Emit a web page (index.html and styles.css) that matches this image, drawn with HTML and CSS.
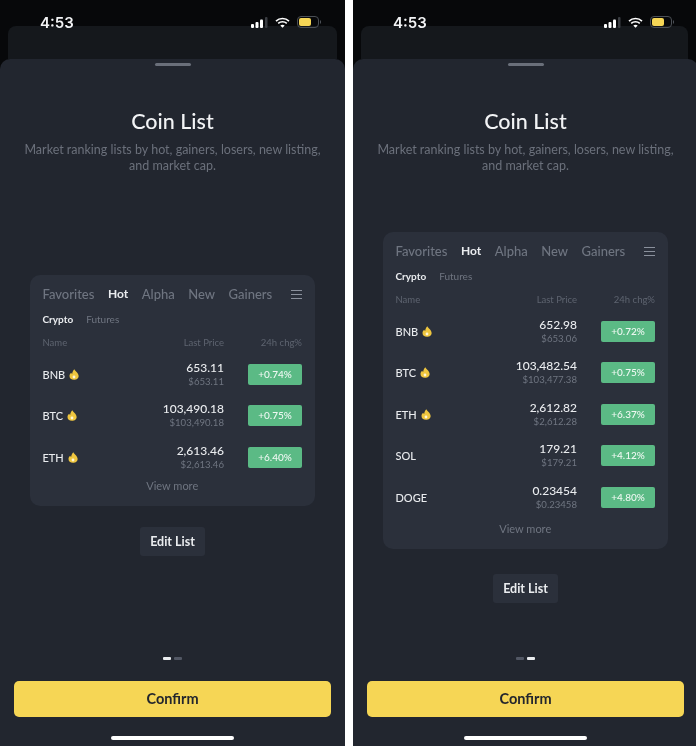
FILE: index.html
```html
<!DOCTYPE html>
<html lang="en">
<head>
  <meta charset="UTF-8" />
  <meta name="viewport" content="width=device-width, initial-scale=1.0" />
  <title>Coin List</title>
  <link rel="stylesheet" href="styles.css">
</head>
<body>
  <svg class="defs" width="0" height="0">
    <symbol id="flame" viewBox="0 0 10 11">
      <path fill="#efc63f" d="M5.3 0.2C5.8 1.8 9.4 3.6 9.6 6.8C9.8 9.3 7.7 10.8 5 10.8C2.3 10.8 0.3 9.3 0.5 6.8C0.6 5.4 1.4 4.5 2.2 3.8C2.4 4.4 2.7 4.8 3.2 5C3.2 3.2 4.1 1.3 5.3 0.2Z"/>
      <circle fill="#fff6d6" cx="5" cy="8" r="1.4"/>
    </symbol>
  </svg>

  <div class="phone">
    <div class="status-bar">
      <span class="time">4:53</span>
      <div class="status-icons">
        <svg width="17" height="11" viewBox="0 0 17 11"><rect fill="#fff" x="0" y="7" width="3" height="4" rx="1"/><rect fill="#fff" x="4.5" y="5" width="3" height="6" rx="1"/><rect fill="#fff" x="9" y="2.5" width="3" height="8.5" rx="1"/><rect fill="#3a3d42" x="14" y="0" width="2.5" height="11" rx="1"/></svg>
        <svg width="15" height="11" viewBox="0 0 15 11"><path fill="none" stroke="#fff" stroke-width="1.6" d="M1 4.1C4.6 0.7 10.4 0.7 14 4.1M3.2 6.4C5.6 4.2 9.4 4.2 11.8 6.4"/><path fill="#fff" d="M7.5 10.8L5.3 8.4C6.5 7.4 8.5 7.4 9.7 8.4Z"/></svg>
        <svg width="24" height="12" viewBox="0 0 24 12"><rect fill="none" stroke="#4b4f55" x="0.5" y="0.5" width="21" height="11" rx="3.5"/><rect fill="#f6d655" x="2" y="2" width="12" height="8" rx="2"/><rect fill="#4b4f55" x="23" y="4.5" width="1" height="3"/></svg>
      </div>
    </div>
    <div class="back-card"></div>
    <div class="sheet">
      <div class="handle"></div>
      <h1>Coin List</h1>
      <p class="desc">Market ranking lists by hot, gainers, losers, new listing, and market cap.</p>

      <div class="preview">
        <div class="card">
          <div class="tabs">
            <span>Favorites</span><span class="active">Hot</span><span>Alpha</span><span>New</span><span>Gainers</span>
            <div class="menu-icon"><i></i><i></i><i></i></div>
          </div>
          <div class="subtabs"><span class="active">Crypto</span><span>Futures</span></div>
          <div class="row head"><span>Name</span><span class="right">Last Price</span><span class="right">24h chg%</span></div>
          <div class="row">
            <div class="coin">BNB <svg class="flame"><use href="#flame"/></svg></div>
            <div class="price">653.11<small>$653.11</small></div>
            <div class="badge">+0.74%</div>
          </div>
          <div class="row">
            <div class="coin">BTC <svg class="flame"><use href="#flame"/></svg></div>
            <div class="price">103,490.18<small>$103,490.18</small></div>
            <div class="badge">+0.75%</div>
          </div>
          <div class="row">
            <div class="coin">ETH <svg class="flame"><use href="#flame"/></svg></div>
            <div class="price">2,613.46<small>$2,613.46</small></div>
            <div class="badge">+6.40%</div>
          </div>
          <div class="view-more">View more</div>
        </div>
        <button class="edit-btn">Edit List</button>
      </div>

      <div class="dots"><i class="on"></i><i></i></div>
      <button class="confirm">Confirm</button>
      <div class="home-bar"></div>
    </div>
  </div>

  <div class="phone second">
    <div class="status-bar">
      <span class="time">4:53</span>
      <div class="status-icons">
        <svg width="17" height="11" viewBox="0 0 17 11"><rect fill="#fff" x="0" y="7" width="3" height="4" rx="1"/><rect fill="#fff" x="4.5" y="5" width="3" height="6" rx="1"/><rect fill="#fff" x="9" y="2.5" width="3" height="8.5" rx="1"/><rect fill="#3a3d42" x="14" y="0" width="2.5" height="11" rx="1"/></svg>
        <svg width="15" height="11" viewBox="0 0 15 11"><path fill="none" stroke="#fff" stroke-width="1.6" d="M1 4.1C4.6 0.7 10.4 0.7 14 4.1M3.2 6.4C5.6 4.2 9.4 4.2 11.8 6.4"/><path fill="#fff" d="M7.5 10.8L5.3 8.4C6.5 7.4 8.5 7.4 9.7 8.4Z"/></svg>
        <svg width="24" height="12" viewBox="0 0 24 12"><rect fill="none" stroke="#4b4f55" x="0.5" y="0.5" width="21" height="11" rx="3.5"/><rect fill="#f6d655" x="2" y="2" width="12" height="8" rx="2"/><rect fill="#4b4f55" x="23" y="4.5" width="1" height="3"/></svg>
      </div>
    </div>
    <div class="back-card"></div>
    <div class="sheet">
      <div class="handle"></div>
      <h1>Coin List</h1>
      <p class="desc">Market ranking lists by hot, gainers, losers, new listing, and market cap.</p>

      <div class="preview">
        <div class="card">
          <div class="tabs">
            <span>Favorites</span><span class="active">Hot</span><span>Alpha</span><span>New</span><span>Gainers</span>
            <div class="menu-icon"><i></i><i></i><i></i></div>
          </div>
          <div class="subtabs"><span class="active">Crypto</span><span>Futures</span></div>
          <div class="row head"><span>Name</span><span class="right">Last Price</span><span class="right">24h chg%</span></div>
          <div class="row">
            <div class="coin">BNB <svg class="flame"><use href="#flame"/></svg></div>
            <div class="price">652.98<small>$653.06</small></div>
            <div class="badge">+0.72%</div>
          </div>
          <div class="row">
            <div class="coin">BTC <svg class="flame"><use href="#flame"/></svg></div>
            <div class="price">103,482.54<small>$103,477.38</small></div>
            <div class="badge">+0.75%</div>
          </div>
          <div class="row">
            <div class="coin">ETH <svg class="flame"><use href="#flame"/></svg></div>
            <div class="price">2,612.82<small>$2,612.28</small></div>
            <div class="badge">+6.37%</div>
          </div>
          <div class="row">
            <div class="coin">SOL</div>
            <div class="price">179.21<small>$179.21</small></div>
            <div class="badge">+4.12%</div>
          </div>
          <div class="row">
            <div class="coin">DOGE</div>
            <div class="price">0.23454<small>$0.23458</small></div>
            <div class="badge">+4.80%</div>
          </div>
          <div class="view-more">View more</div>
        </div>
        <button class="edit-btn">Edit List</button>
      </div>

      <div class="dots"><i></i><i class="on"></i></div>
      <button class="confirm">Confirm</button>
      <div class="home-bar"></div>
    </div>
  </div>
</body>
</html>
```

FILE: styles.css
```css
body {
  font-family: 'Lato', 'Liberation Sans', sans-serif;
  margin: 0;
  background: #fff;
  display: flex;
  gap: 8px;
  height: 746px;
  overflow: hidden;
}

.defs {
  position: absolute;
}

.phone {
  flex: none;
  width: 345px;
  height: 746px;
  background: #07080a;
  display: flex;
  flex-direction: column;
  filter: blur(0.3px);
}

.phone.second {
  width: 343px;
}

.status-bar {
  height: 26px;
  padding: 0 24px 0 40px;
  display: flex;
  align-items: flex-start;
  justify-content: space-between;
  position: relative;
  z-index: 1;
}

.second .status-bar {
  padding-right: 22px;
}

.time {
  color: #f2f3f5;
  font-family: 'Inter', sans-serif;
  font-size: 15px;
  font-weight: 600;
  line-height: 18px;
  margin-top: 14px;
}

.status-icons {
  display: flex;
  align-items: center;
  gap: 7px;
  margin-top: 16px;
}

.back-card {
  height: 33px;
  margin: 0 8px;
  background: #15181c;
  border-radius: 8px 8px 0 0;
}

.sheet {
  flex: 1;
  background: #22262f;
  border-radius: 10px 10px 0 0;
  display: flex;
  flex-direction: column;
  align-items: center;
}

.second .sheet {
  margin-right: -2px;
}

.handle {
  width: 36px;
  height: 3px;
  margin-top: 4px;
  background: #6a6f7a;
  border-radius: 2px;
}

h1 {
  color: #f2f3f5;
  font-size: 21.5px;
  font-weight: 500;
  line-height: 26px;
  margin: 42px 0 0;
}

.desc {
  color: #6b707b;
  font-size: 12.5px;
  line-height: 16px;
  margin: 8px 0 0;
  width: 310px;
  text-align: center;
}

.preview {
  flex: 1;
  display: flex;
  flex-direction: column;
  align-items: center;
  justify-content: center;
  gap: 21px;
  margin-top: 5px;
}

.second .preview {
  gap: 25px;
  margin-top: 9px;
}

.card {
  width: 285px;
  box-sizing: border-box;
  background: #2b303b;
  border-radius: 10px;
  padding: 11px 13px 13px 12.5px;
}

.tabs {
  display: flex;
  align-items: center;
  gap: 13.5px;
  color: #6f7581;
  font-size: 13px;
  font-weight: 500;
  line-height: 16px;
}

.tabs .active {
  color: #eaecef;
  font-size: 12px;
  font-weight: 700;
}

.menu-icon {
  margin-left: auto;
  width: 11px;
  display: flex;
  flex-direction: column;
  gap: 3px;
}

.menu-icon i {
  height: 1px;
  background: #8a909c;
}

.subtabs {
  display: flex;
  gap: 13px;
  margin-top: 11px;
  color: #6f7581;
  font-size: 10px;
  line-height: 12px;
}

.subtabs .active {
  color: #eaecef;
  font-weight: 700;
}

.row {
  display: grid;
  grid-template-columns: 1fr 110px 54px;
  column-gap: 24px;
  align-items: center;
  height: 41.5px;
}

.row.head {
  height: 12px;
  margin: 12px 0 4px;
  color: #5e6470;
  font-size: 9.5px;
  line-height: 12px;
}

.right {
  text-align: right;
  white-space: nowrap;
}

.coin {
  color: #eaecef;
  font-size: 11px;
  font-weight: 500;
  display: flex;
  align-items: center;
  gap: 4px;
}

.flame {
  width: 10px;
  height: 11px;
}

.price {
  color: #eaecef;
  font-size: 12px;
  font-weight: 500;
  line-height: 14px;
  text-align: right;
}

.price small {
  display: block;
  color: #6f7581;
  font-size: 9.6px;
  font-weight: 400;
  line-height: 13px;
}

.badge {
  height: 21px;
  line-height: 21px;
  background: #5bba85;
  border-radius: 2px;
  color: #eef8f2;
  font-size: 10px;
  font-weight: 500;
  text-align: center;
}

.view-more {
  color: #6f7581;
  font-size: 11px;
  line-height: 14px;
  text-align: center;
  margin-top: 1px;
}

.second .view-more {
  margin-top: 4px;
}

.edit-btn {
  width: 65px;
  height: 29px;
  background: #2b303b;
  border: none;
  border-radius: 3px;
  padding: 0;
  color: #eaecef;
  font-family: inherit;
  font-size: 12.5px;
  font-weight: 700;
}

.dots {
  display: flex;
  gap: 3px;
  margin-top: 5px;
}

.dots i {
  width: 8px;
  height: 3px;
  background: #525764;
  border-radius: 1px;
}

.dots i.on {
  background: #eaecef;
}

.confirm {
  width: 317px;
  height: 36px;
  margin-top: 21px;
  background: #f6d655;
  border: none;
  border-radius: 5px;
  padding: 0 0 1px;
  color: #23262d;
  font-family: inherit;
  font-size: 14.5px;
  font-weight: 700;
}

.home-bar {
  width: 123px;
  height: 4px;
  margin: 19px 0 6px;
  background: #fff;
  border-radius: 2px;
}
```
